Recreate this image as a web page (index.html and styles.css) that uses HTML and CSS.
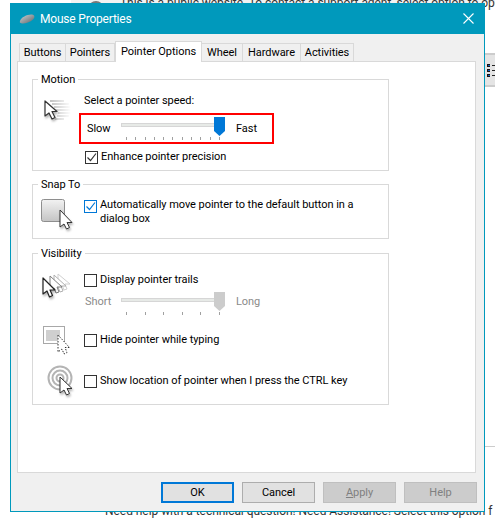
FILE: index.html
```html
<!DOCTYPE html>
<html lang="en">
<head>
<meta charset="utf-8">
<title>Mouse Properties</title>
<link rel="stylesheet" href="styles.css">
</head>
<body>
<div class="backdrop">
  <div class="top-strip"><span class="avatar"></span></div>
  <div class="top-text">This is a public website. To contact a support agent, select option to ope</div>
  <div class="side-strip">
    <svg class="list-icon" width="10" height="14" viewBox="0 0 10 14"><path d="M2 0h3v3H2zM2 5h3v3H2zM2 10h3v3H2z" fill="#1a1010"/><path d="M3 1h2v1H3zM3 6h2v1H3zM3 11h2v1H3z" fill="#0a5cc0"/><path d="M7 1.500h3M7 6.500h3M7 11.500h3" stroke="#222"/></svg>
  </div>
  <div class="side-line"></div>
  <div class="bottom-text">Need help with a technical question! Need Assistance! Select this option f</div>
</div>

<div class="window">
  <header class="titlebar">
    <svg class="mouse-icon" width="16" height="10" viewBox="0 0 16 10"><defs><linearGradient id="m" x1="0" y1="0" x2="1" y2="1"><stop offset="0" stop-color="#cfd3d6"/><stop offset="1" stop-color="#5b6266"/></linearGradient></defs><path d="M1 7C2 3 9 0 13 .5c3 .4 3 3 1 5-3 3-9 4.500-11 4C1 9 .5 8.500 1 7z" fill="url(#m)"/></svg>
    <span class="title">Mouse Properties</span>
    <svg class="close" width="11" height="11" viewBox="0 0 11 11"><path d="M.5.5l10 10M10.500.5l-10 10" stroke="#fff" stroke-width="1.100"/></svg>
  </header>

  <div class="tabs">
    <span class="tab buttons-tab">Buttons</span>
    <span class="tab pointers-tab">Pointers</span>
    <span class="tab active">Pointer Options</span>
    <span class="tab wheel-tab">Wheel</span>
    <span class="tab hardware-tab">Hardware</span>
    <span class="tab activities-tab">Activities</span>
  </div>

  <main class="panel">
    <section class="group motion">
      <div class="legend">Motion</div>
      <div class="row">
        <svg class="icon" width="28" height="24" viewBox="0 0 28 24">
          <defs><linearGradient id="s" x1="0" x2="1"><stop offset="0" stop-color="#8a8a8a"/><stop offset="1" stop-color="#fff"/></linearGradient></defs>
          <path d="M6 1h14M8 4h17M10 7h17M12 10h15M14 13h13M13 16h12M11 19h9" stroke="url(#s)" stroke-width="1.500" opacity=".7"/>
          <path class="cursor" d="M1 1v15l4-3 3 6 3-1.500-3-6h5z" fill="#fff" stroke="#333" stroke-width="1.200" stroke-linejoin="round"/>
        </svg>
        <div class="col">
          <div class="label speed">Select a pointer speed:</div>
          <div class="slider-row">
            <span class="red-box"></span>
            <span class="side-label slow">Slow</span>
            <div class="slider">
              <div class="track"></div>
              <svg class="thumb" width="11" height="19" viewBox="0 0 11 19"><path d="M0 0h11v14l-5.500 5L0 14z" fill="#0078d7"/></svg>
              <div class="ticks"><i></i><i></i><i></i><i></i><i></i><i></i><i></i><i></i><i></i><i></i><i></i></div>
            </div>
            <span class="side-label">Fast</span>
          </div>
          <label class="check enhance"><span class="box"><svg width="11" height="11" viewBox="0 0 11 11"><path d="M1.500 5.500l3 3 5.500-7" fill="none" stroke="#333" stroke-width="1.200"/></svg></span>Enhance pointer precision</label>
        </div>
      </div>
    </section>

    <section class="group snap">
      <div class="legend">Snap To</div>
      <div class="row">
        <svg class="icon" width="34" height="34" viewBox="0 0 34 34">
          <defs><linearGradient id="b" x1="0" x2="0" y1="0" y2="1"><stop offset="0" stop-color="#f2f2f2"/><stop offset="1" stop-color="#c4c4c4"/></linearGradient></defs>
          <rect x=".5" y=".5" width="23" height="22" rx="2" fill="url(#b)" stroke="#8e8e8e"/>
          <path class="cursor" d="M19 11v17l4-3 2.500 5 3-1.500-2.500-5h5z" fill="#fff" stroke="#333" stroke-linejoin="round"/>
        </svg>
        <label class="check auto"><span class="box blue"><svg width="11" height="11" viewBox="0 0 11 11"><path d="M1.500 5.500l3 3 5.500-7" fill="none" stroke="#0078d7" stroke-width="1.200"/></svg></span><span>Automatically move pointer to the default button in a dialog box</span></label>
      </div>
    </section>

    <section class="group visibility">
      <div class="legend">Visibility</div>
      <div class="row trails">
        <svg class="icon" width="32" height="26" viewBox="0 0 32 26">
          <g fill="#fff" stroke-linejoin="round">
            <path d="M16 1v14l4-3 2 5 3-1-2-5h5z" stroke="#d0d0d0"/>
            <path d="M12 2v15l4-3 2 5 3-1-2-5h5z" stroke="#b0b0b0"/>
            <path d="M8 3v15l4-3 2 5 3-1-2-5h5z" stroke="#808080"/>
            <path class="cursor" d="M1 5v16l4-3 2.500 6 3-1.500-2.500-5.500h5z" stroke="#222" stroke-width="1.200"/>
          </g>
        </svg>
        <div class="col">
          <label class="check"><span class="box"></span>Display pointer trails</label>
          <div class="slider-row off">
            <span class="side-label short">Short</span>
            <div class="slider">
              <div class="track"></div>
              <svg class="thumb" width="11" height="19" viewBox="0 0 11 19"><path d="M0 0h11v14l-5.500 5L0 14z" fill="#ccc"/></svg>
              <div class="ticks"><i></i><i></i><i></i><i></i><i></i><i></i></div>
            </div>
            <span class="side-label">Long</span>
          </div>
        </div>
      </div>
      <div class="row hide">
        <svg class="icon" width="28" height="30" viewBox="0 0 28 30">
          <rect x=".5" y=".5" width="21" height="17" fill="#fff" stroke="#a8a8a8"/>
          <rect x="3" y="4" width="14" height="11" fill="#cfcfcf"/>
          <path d="M15 9v17l4-3 2 5 3-1.500-2-5h4.500z" fill="#fff" stroke="#333" stroke-dasharray="1.500 1.500"/>
        </svg>
        <label class="check"><span class="box"></span>Hide pointer while typing</label>
      </div>
      <div class="row show">
        <svg class="icon" width="32" height="32" viewBox="0 0 32 32">
          <circle cx="13" cy="13" r="11.500" fill="none" stroke="#b4b4b4" stroke-width="2"/>
          <circle cx="13" cy="13" r="7.500" fill="none" stroke="#b4b4b4" stroke-width="2"/>
          <circle cx="13" cy="13" r="3.500" fill="none" stroke="#b4b4b4" stroke-width="2"/>
          <path class="cursor" d="M13 12v16l4-3 2.500 5 3-1.500-2.500-5h5z" fill="#fff" stroke="#333" stroke-linejoin="round"/>
        </svg>
        <label class="check"><span class="box"></span>Show location of pointer when I press the CTRL key</label>
      </div>
    </section>
  </main>

  <footer class="buttons">
    <button class="btn default">OK</button>
    <button class="btn">Cancel</button>
    <button class="btn disabled"><u>A</u>pply</button>
    <button class="btn disabled">Help</button>
  </footer>
</div>
</body>
</html>
```
FILE: styles.css
```css
* { box-sizing: border-box; }
html, body { margin: 0; height: 100%; }
body {
  position: relative;
  width: 495px;
  height: 522px;
  overflow: hidden;
  background: #fff;
  font: 11px/16px Roboto, "Liberation Sans", sans-serif;
  letter-spacing: -0.05px;
  color: #000;
}
svg { display: block; overflow: visible; }

/* page behind the dialog */
.top-strip {
  position: absolute;
  left: 71px; top: 0; right: 0;
  height: 3px;
  overflow: hidden;
  background: #f2f2f2;
}
.avatar {
  position: absolute;
  left: 17px; top: 1px;
  width: 16px; height: 16px;
  border-radius: 50%;
  border: 2px solid #777;
}
.top-text {
  position: absolute;
  left: 120px; top: -7px;
  line-height: 20px;
  font-size: 12px;
  white-space: nowrap;
  color: #333;
}
.side-strip {
  position: absolute;
  left: 485px; top: 53px;
  width: 10px; height: 34px;
  background: #e4e4e4;
  border-top: 2px solid #ccc;
  border-bottom: 2px solid #ccc;
  padding-top: 9px;
}
.side-line { position: absolute; left: 485px; top: 446px; width: 10px; height: 1px; background: #ccc; }
.bottom-text {
  position: absolute;
  left: 105px; top: 501px;
  white-space: nowrap;
  font-size: 12px; line-height: 20px;
  color: #333;
}

/* dialog window */
.window {
  position: absolute;
  left: 10px; top: 3px;
  width: 475px; height: 509px;
  background: #f0f0f0;
  border: 1px solid #0099bc;
  border-top: 0;
  display: flex;
  flex-direction: column;
}
.titlebar {
  height: 31px;
  flex: none;
  background: #0099bc;
  color: #fff;
  display: flex;
  align-items: center;
  padding: 0 10px 0 8px;
  font-size: 12px;
  letter-spacing: -0.2px;
  gap: 5px;
}
.title { flex: 1; }
.tabs {
  display: flex;
  align-items: flex-end;
  height: 27px;
  flex: none;
  padding-left: 8px;
  position: relative;
  z-index: 1;
}
.tab {
  height: 18px;
  line-height: 17px;
  text-align: center;
  border: 1px solid #d9d9d9;
  border-bottom: 0;
  border-left-width: 0;
  background: #f0f0f0;
}
.buttons-tab { width: 47px; border-left-width: 1px; }
.pointers-tab { width: 49px; }
.wheel-tab { width: 41px; }
.hardware-tab { width: 58px; }
.activities-tab { width: 53px; }
.tab.active {
  width: 87px;
  height: 21px;
  line-height: 19px;
  background: #fff;
  border-left-width: 1px;
  margin-bottom: -1px;
}
.panel {
  margin-left: 6px;
  width: 459px;
  height: 412px;
  background: #fff;
  border: 1px solid #d9d9d9;
  padding: 17px 0 0 14px;
  flex: none;
}
.group {
  width: 357px;
  border: 1px solid #d9d9d9;
}
.motion { height: 92px; margin-bottom: 13px; }
.snap { height: 55px; margin-bottom: 14px; }
.visibility { height: 152px; }
.legend {
  width: fit-content;
  margin: -8px 0 0 5px;
  padding: 0 3px;
  background: #fff;
}
.row { display: flex; align-items: flex-start; }
.icon { flex: none; }
.cursor { filter: drop-shadow(1px 2px 1px rgba(0, 0, 0, .3)); }
.col { display: flex; flex-direction: column; }
.motion .row { padding: 5px 0 0 11px; }
.motion .icon { margin: 7px 12px 0 0; }
.slider-row {
  position: relative;
  display: flex;
  align-items: center;
  height: 31px;
  margin-top: 4px;
  padding-left: 3px;
}
.red-box {
  position: absolute;
  left: -5px; top: 0;
  width: 195px; height: 31px;
  border: 2px solid #f00;
}
.side-label { width: 34px; flex: none; margin-top: 1px; }
.off .side-label { margin: 0 0 1px; color: #8a8a8a; }
.slider { position: relative; width: 104px; height: 31px; margin-right: 11px; flex: none; }
.track {
  margin-top: 10px;
  width: 100px; height: 4px;
  background: #e7eae7;
  border: 1px solid #d6d6d6;
}
.thumb { position: absolute; left: 93px; top: 4px; }
.ticks {
  display: flex;
  justify-content: space-between;
  margin: 10px 5px 0 5px;
}
.ticks i { width: 1px; height: 3px; background: #a0a0a0; }
.check { display: flex; align-items: flex-start; gap: 3px; white-space: nowrap; }
.box {
  width: 13px; height: 13px;
  flex: none;
  margin-top: 2px;
  border: 1px solid #333;
  background: #fff;
}
.box.blue { border-color: #0078d7; }
.enhance { margin: 5px 0 0 1px; }
.snap .row { padding-left: 8px; }
.snap .icon { margin: 6px 9px 0 0; }
.auto { margin-top: 5px; white-space: normal; width: 274px; line-height: 14px; }
.trails { padding: 10px 0 0 9px; height: 64px; }
.trails .icon { margin: 1px 10px 0 0; }
.trails .slider-row { margin-top: -1px; padding-left: 1px; }
.off .short { width: 36px; }
.off .thumb { top: 5px; }
.off .track { margin-top: 11px; }
.hide { height: 39px; padding-left: 10px; }
.hide .icon { margin-right: 13px; }
.hide .check { margin-top: 6px; }
.show { padding-left: 14px; }
.show .icon { margin-right: 5px; }
.show .check { margin-top: 8px; }

/* footer */
.buttons {
  display: flex;
  gap: 8px;
  padding: 9px 0 0 150px;
}
.btn {
  width: 73px; height: 21px;
  padding: 0;
  font: inherit;
  letter-spacing: inherit;
  color: #000;
  background: #e1e1e1;
  border: 1px solid #adadad;
}
.btn.default { border: 2px solid #0078d7; }
.btn.disabled { background: #ccc; border-color: #bfbfbf; color: #808080; }
```
